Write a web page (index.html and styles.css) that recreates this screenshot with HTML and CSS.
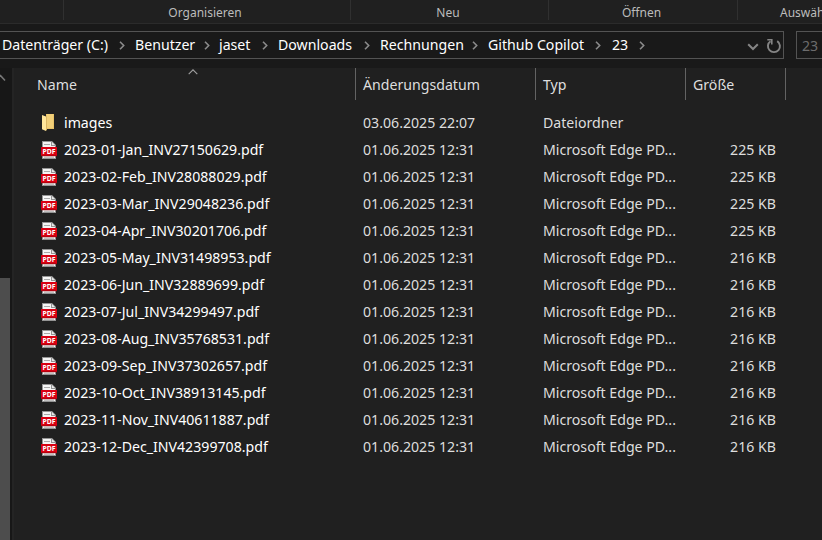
FILE: index.html
```
<!DOCTYPE html>
<html lang="de">
<head>
<meta charset="utf-8">
<title>23</title>
<link rel="stylesheet" href="styles.css">
</head>
<body>
<svg class="defs" aria-hidden="true">
  <symbol id="pdf" viewBox="0 0 16 18">
    <path d="M1 0h10l4 4v14H1z" fill="#949494"/>
    <path d="M2 1h8v4h4v12H2z" fill="#f5f5f5"/>
    <path d="M11 1l3 3h-3z" fill="#e8e8e8"/>
    <path d="M3 3.5h6M3 16.2h10" stroke="#aaa"/>
    <path d="M0 6h16v9H0z" fill="#d90012"/>
    <path d="M0 14.3h16v.9H0z" fill="#a8000e"/>
    <text class="pdf-label" x="8" y="12.9" text-anchor="middle" textLength="13" lengthAdjust="spacingAndGlyphs">PDF</text>
  </symbol>
  <symbol id="sep" viewBox="0 0 6 9"><path d="M1 .8l3.7 3.7L1 8.2" fill="none" stroke="#8a8a8a" stroke-width="1.6"/></symbol>
</svg>
<div class="window">
  <header class="ribbon">
    <div class="group g1"></div>
    <div class="group g2"><span>Organisieren</span></div>
    <div class="group g3"><span>Neu</span></div>
    <div class="group g4"><span>Öffnen</span></div>
    <div class="group g5"><span>Auswählen</span></div>
  </header>
  <nav class="navbar">
    <div class="address">
      <div class="crumb c1"><span>Datenträger (C:)</span><svg><use href="#sep"/></svg></div>
      <div class="crumb c2"><span>Benutzer</span><svg><use href="#sep"/></svg></div>
      <div class="crumb c3"><span>jaset</span><svg><use href="#sep"/></svg></div>
      <div class="crumb c4"><span>Downloads</span><svg><use href="#sep"/></svg></div>
      <div class="crumb c5"><span>Rechnungen</span><svg><use href="#sep"/></svg></div>
      <div class="crumb c6"><span>Github Copilot</span><svg><use href="#sep"/></svg></div>
      <div class="crumb c7"><span>23</span><svg><use href="#sep"/></svg></div>
      <svg class="drop" viewBox="0 0 12 8"><path d="M1.2 1.2L6 6l4.8-4.8" fill="none" stroke="#858585" stroke-width="2"/></svg>
      <svg class="reload" viewBox="0 0 16 16"><path d="M11.2 3.1A6 6 0 1 1 4.5 3.2" fill="none" stroke="#858585" stroke-width="1.9"/><path d="M1.3 1.7h4.5v4.8" fill="none" stroke="#858585" stroke-width="1.6"/></svg>
    </div>
    <div class="search">23</div>
  </nav>
  <div class="body">
    <aside class="tree"><svg viewBox="0 0 6 8"><path d="M0 1l5 5.5" fill="none" stroke="#777" stroke-width="1.6"/></svg><div class="thumb"></div></aside>
    <main class="files">
      <div class="row head">
        <div class="name">Name<svg class="sort" viewBox="0 0 10 6"><path d="M.7 5.2L5 .9l4.3 4.3" fill="none" stroke="#a0a0a0" stroke-width="1.1"/></svg></div>
        <div class="date">Änderungsdatum</div><div class="type">Typ</div><div class="size">Größe</div>
      </div>
      <div class="rows" id="rows">
        <div class="row">
          <div class="name"><svg class="folder" viewBox="0 0 12 17"><path d="M4 0h8v15H4z" fill="#e8c268"/><path d="M5 0h6v14H5z" fill="#f1cf78"/><path d="M0 1l4 1.5V17L0 15.3z" fill="#ffe69b"/><path d="M4 2.5V17l1-1.5V2z" fill="#d9b562"/></svg><span>images</span></div>
          <div class="date">03.06.2025 22:07</div><div class="type">Dateiordner</div><div class="size"></div>
        </div>
      </div>
    </main>
  </div>
</div>
<script src="files.js"></script>
</body>
</html>
```
FILE: styles.css
```
* { box-sizing: border-box; }
body { margin: 0; background: #191919; color: #dedede; font: 14.15px/20px "Noto Sans", "Open Sans", sans-serif; overflow: hidden; }
svg { display: block; flex: none; }
.defs { position: absolute; width: 0; height: 0; }
.pdf-label { font: bold 6.8px "Noto Sans", sans-serif; fill: #fff; }
.window { width: 822px; height: 540px; display: flex; flex-direction: column; overflow: hidden; white-space: nowrap; }

.ribbon { height: 24px; flex: none; display: flex; background: #202020; border-bottom: 1px solid #2b2b2b; color: #bcbcbc; font-size: 12px; }
.group { height: 20px; flex: none; border-right: 1px solid #303030; display: flex; justify-content: center; line-height: 25px; }
.g1 { width: 64px; }
.g2 { width: 287px; padding-right: 4px; }
.g3 { width: 198px; padding-right: 3px; }
.g4 { width: 189px; padding-right: 3px; }
.g5 { width: 120px; border: 0; padding-left: 42px; justify-content: flex-start; }

.navbar { height: 44px; flex: none; display: flex; gap: 12px; padding-top: 7px; }
.address { width: 784px; height: 28px; flex: none; display: flex; align-items: center; border: 1px solid #535353; border-left: 0; padding-left: 2px; color: #fff; }
.crumb { display: flex; flex: none; align-items: center; justify-content: space-between; }
.crumb svg { width: 6px; height: 9px; }
.crumb span { width: 0; }
.c1 { width: 123px; margin-right: 10px; }
.c2 { width: 75px; margin-right: 9px; }
.c3 { width: 49px; margin-right: 10px; }
.c4 { width: 92px; margin-right: 10px; }
.c5 { width: 98px; margin-right: 10px; }
.c6 { width: 113px; margin-right: 11px; }
.c7 { width: 33px; }
.drop { width: 12px; height: 8px; margin: 3px 7px 0 auto; }
.reload { width: 16px; height: 16px; margin: 2px 1px 0 0; }
.search { width: 60px; height: 28px; flex: none; border: 1px solid #535353; padding: 4px 5px; color: #6c6c6c; }

.body { flex: 1; display: flex; min-height: 0; }
.tree { width: 14px; flex: none; background: #171717; border-right: 2px solid #242424; display: flex; flex-direction: column; justify-content: space-between; }
.tree svg { width: 6px; height: 8px; margin-top: 6px; }
.thumb { width: 10px; height: 262px; background: #4d4d4d; }
.files { flex: 1; background: #202020; }
.row { display: flex; height: 27px; align-items: center; }
.name { width: 342px; padding-left: 27px; display: flex; align-items: center; color: #fff; }
.name span { margin-left: 7px; }
.date { width: 180px; padding-left: 7px; }
.type { width: 150px; padding-left: 7px; }
.size { width: 100px; padding-right: 10px; text-align: right; }
.pdf { width: 16px; height: 18px; }
.folder { width: 12px; height: 17px; margin: 0 3px 0 1px; }
.head { height: 32px; }
.head > div { height: 32px; line-height: 33px; border-right: 1px solid #636363; color: #dedede; }
.head .name { padding-left: 23px; align-items: flex-start; position: relative; }
.head .size { text-align: left; padding-left: 7px; width: 100px; }
.sort { position: absolute; left: 174px; top: 1px; width: 10px; height: 6px; }
.rows { padding-top: 9px; }
```
FILE: files.js
```
const files = [
  ["2023-01-Jan_INV27150629.pdf", 225], ["2023-02-Feb_INV28088029.pdf", 225],
  ["2023-03-Mar_INV29048236.pdf", 225], ["2023-04-Apr_INV30201706.pdf", 225],
  ["2023-05-May_INV31498953.pdf", 216], ["2023-06-Jun_INV32889699.pdf", 216],
  ["2023-07-Jul_INV34299497.pdf", 216], ["2023-08-Aug_INV35768531.pdf", 216],
  ["2023-09-Sep_INV37302657.pdf", 216], ["2023-10-Oct_INV38913145.pdf", 216],
  ["2023-11-Nov_INV40611887.pdf", 216], ["2023-12-Dec_INV42399708.pdf", 216]
];
document.getElementById("rows").insertAdjacentHTML("beforeend", files.map(([name, kb]) =>
  `<div class="row"><div class="name"><svg class="pdf"><use href="#pdf"/></svg><span>${name}</span></div>` +
  `<div class="date">01.06.2025 12:31</div><div class="type">Microsoft Edge PD...</div><div class="size">${kb} KB</div></div>`
).join(""));
```
